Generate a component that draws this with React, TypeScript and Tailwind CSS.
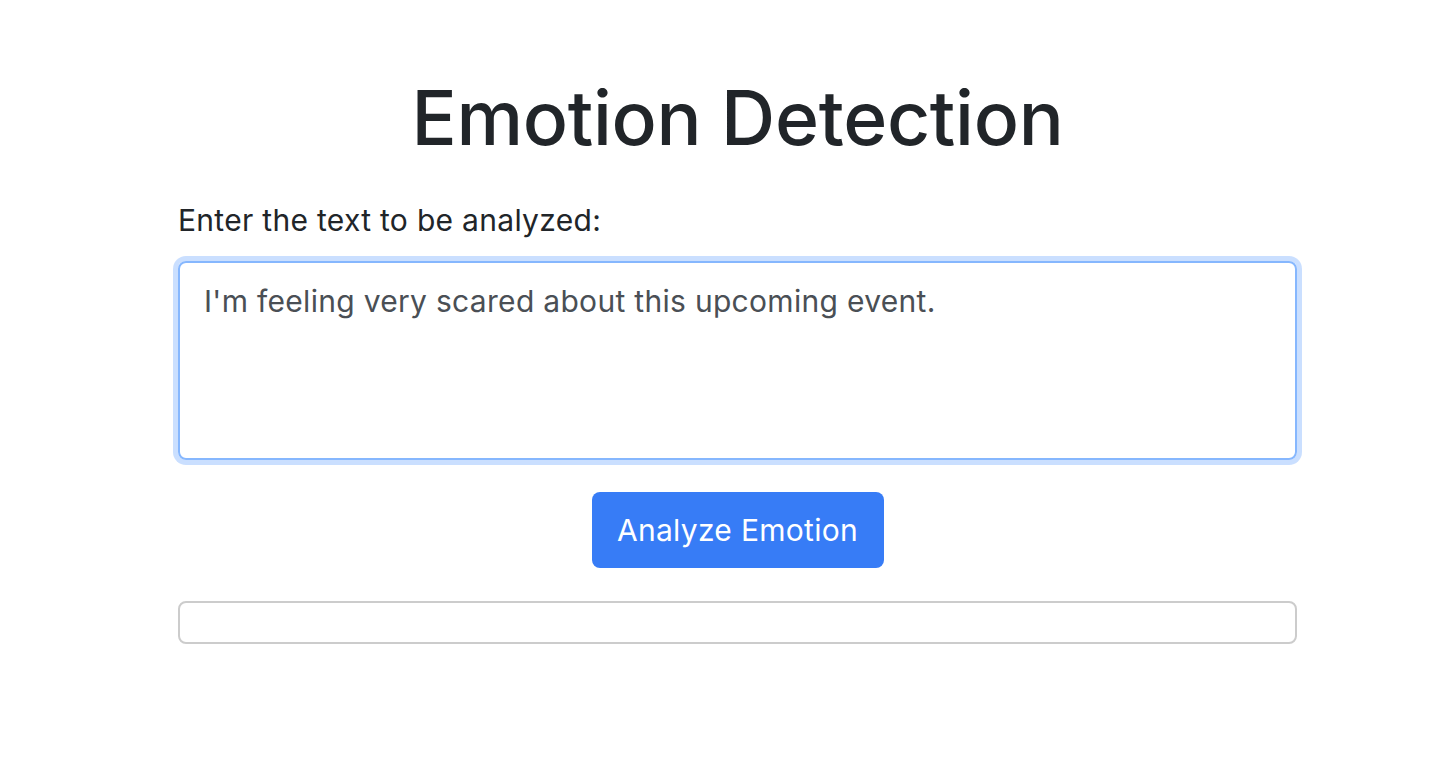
export default function App() {
  return (
    <div className="flex min-h-screen justify-center bg-white pl-[25px] font-['Inter',sans-serif] text-[#212529]">
      <div className="w-[1119px] pt-[73px]">
        <h1 className="text-center text-[75px] font-medium leading-[1.2] tracking-[-0.3px]">
          Emotion Detection
        </h1>
        <label className="mt-[35px] block text-[30px] leading-[1.5] tracking-[0.3px]">
          Enter the text to be analyzed:
        </label>
        <textarea
          className="mt-[18px] block h-[199px] w-full resize-none rounded-[8px] border-2 border-[#86b7fe] px-[24px] py-[16px] text-[30px] leading-[1.5] tracking-[0.3px] text-[#4a4f55] shadow-[0_0_0_5px_rgba(13,110,253,0.22)] outline-none"
          defaultValue="I'm feeling very scared about this upcoming event."
        />
        <div className="mt-[32px] flex justify-center">
          <button className="h-[76px] w-[292px] rounded-[8px] bg-[#377cf6] text-[30px] tracking-[0.3px] text-white">
            Analyze Emotion
          </button>
        </div>
        <div className="mt-[33px] h-[43px] rounded-[8px] border-2 border-[#cccccc]" />
      </div>
    </div>
  );
}
